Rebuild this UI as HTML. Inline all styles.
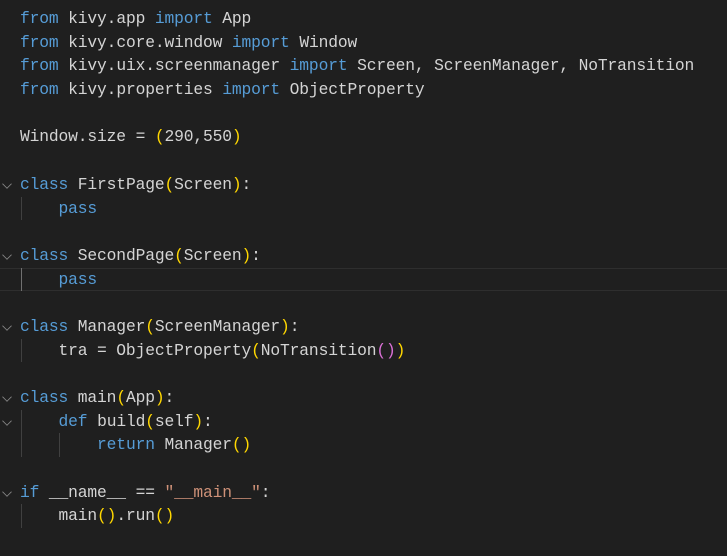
<!DOCTYPE html>
<html><head><style>
html,body{margin:0;padding:0;background:#1f1f1f;width:727px;height:556px;overflow:hidden}
.ed{position:absolute;left:0;top:7px;width:727px;font-family:"Liberation Mono",monospace;font-size:16.3px;letter-spacing:-0.14px;color:#d4d4d4}
.l{height:23.7px;line-height:23.7px;white-space:pre;padding-left:20px;position:relative}
.k{color:#569cd6}.y{color:#ffd700}.p{color:#da70d6}.s{color:#ce9178}
.cur{box-shadow:inset 0 1px 0 #2e2e2e,inset 0 -1px 0 #2e2e2e;margin-left:0}
.g{position:absolute;top:0;height:23.7px;width:1px;background:#404040}
.ch{position:absolute;left:3px;top:7px;width:7px;height:7px;border-right:1.3px solid #8a8a8a;border-bottom:1.3px solid #8a8a8a;transform:rotate(45deg) scale(.85)}
</style></head><body><div class="ed">
<div class="l"><span class="k">from</span> kivy.app <span class="k">import</span> App</div>
<div class="l"><span class="k">from</span> kivy.core.window <span class="k">import</span> Window</div>
<div class="l"><span class="k">from</span> kivy.uix.screenmanager <span class="k">import</span> Screen, ScreenManager, NoTransition</div>
<div class="l"><span class="k">from</span> kivy.properties <span class="k">import</span> ObjectProperty</div>
<div class="l"> </div>
<div class="l">Window.size = <span class="y">(</span>290,550<span class="y">)</span></div>
<div class="l"> </div>
<div class="l"><i class="ch"></i><span class="k">class</span> FirstPage<span class="y">(</span>Screen<span class="y">)</span>:</div>
<div class="l"><i class="g" style="left:21px"></i>    <span class="k">pass</span></div>
<div class="l"> </div>
<div class="l"><i class="ch"></i><span class="k">class</span> SecondPage<span class="y">(</span>Screen<span class="y">)</span>:</div>
<div class="l cur"><i class="g" style="left:21px;background:#707070"></i>    <span class="k">pass</span></div>
<div class="l"> </div>
<div class="l"><i class="ch"></i><span class="k">class</span> Manager<span class="y">(</span>ScreenManager<span class="y">)</span>:</div>
<div class="l"><i class="g" style="left:21px"></i>    tra = ObjectProperty<span class="y">(</span>NoTransition<span class="p">()</span><span class="y">)</span></div>
<div class="l"> </div>
<div class="l"><i class="ch"></i><span class="k">class</span> main<span class="y">(</span>App<span class="y">)</span>:</div>
<div class="l"><i class="ch"></i><i class="g" style="left:21px"></i>    <span class="k">def</span> build<span class="y">(</span>self<span class="y">)</span>:</div>
<div class="l"><i class="g" style="left:21px"></i><i class="g" style="left:59px"></i>        <span class="k">return</span> Manager<span class="y">()</span></div>
<div class="l"> </div>
<div class="l"><i class="ch"></i><span class="k">if</span> __name__ == <span class="s">"__main__"</span>:</div>
<div class="l"><i class="g" style="left:21px"></i>    main<span class="y">()</span>.run<span class="y">()</span></div>
</div></body></html>
